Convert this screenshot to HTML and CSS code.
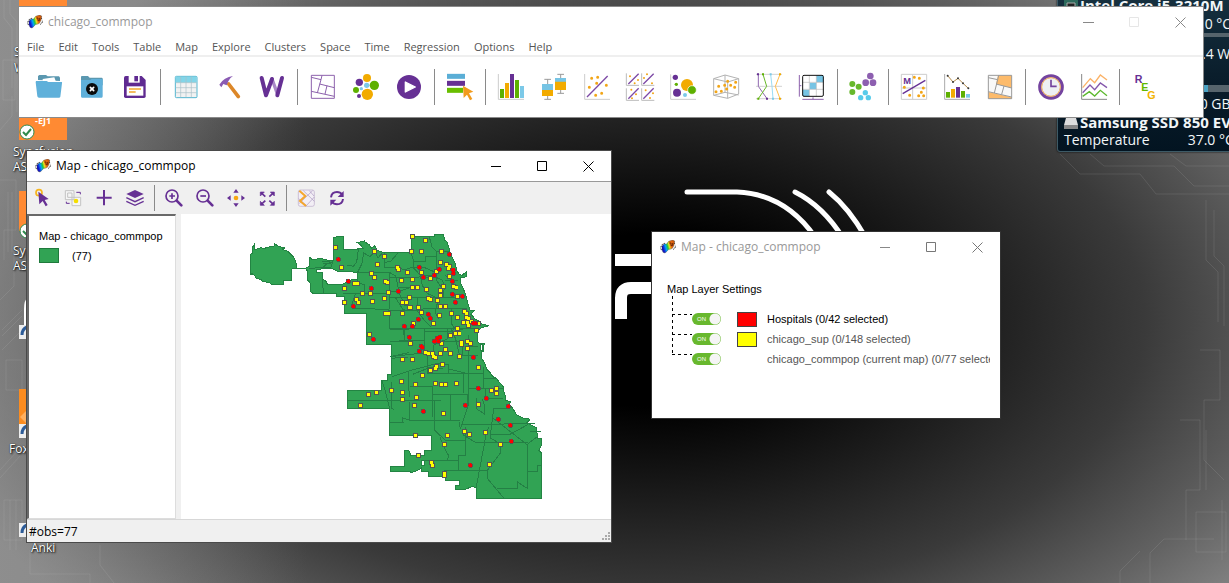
FILE: index.html
```html
<!DOCTYPE html>
<html lang="en">
<head>
<meta charset="utf-8">
<title>chicago_commpop</title>
<link rel="stylesheet" href="styles.css">
</head>
<body>
<svg width="0" height="0" class="defs" aria-hidden="true">
  <defs>
    <linearGradient id="rainbow" x1="0" x2="1" y1=".3" y2="0">
      <stop offset="0" stop-color="#1414c8"/><stop offset=".2" stop-color="#00a0ff"/><stop offset=".35" stop-color="#20c840"/><stop offset=".48" stop-color="#e8e020"/><stop offset=".6" stop-color="#f07010"/><stop offset="1" stop-color="#c05008"/>
    </linearGradient>
    <symbol id="app" viewBox="0 0 48 42">
      <path d="M2 22l4-8 8-4M2 26l4 6M40 28l5-4 2-8M42 8l4 6" fill="none" stroke="#111" stroke-width="3" stroke-dasharray="4 3"/>
      <path d="M6 18l8-7 5 2 7-9 12-4 6 3-2 13-5 9-7 3-4 0-5 6-6 5-6-2-3-8z" fill="url(#rainbow)" stroke="#222" stroke-width="1"/>
      <path d="M28 9h5v8h5v-8" fill="none" stroke="#6a2808" stroke-width="3"/>
    </symbol>
  </defs>
</svg>
<main class="desktop">
  <svg class="wallpaper" width="1229" height="583" viewBox="0 0 1229 583" aria-hidden="true">
    <g fill="none" stroke="#d0d0d0" stroke-opacity=".13" stroke-width="1">
      <path d="M4 0v18l8 10v60M10 0v14l7 8v90M3 60h12v40H3zM0 130l12-14v-20M0 180h16v50H4v30M8 192v60M12 192v60M0 300l14-14v-40M2 330l20-20M2 336l20-20M2 350l20-20M6 360h16v30H6zM0 470l20-22M0 478l20-22M4 500h18v40H4zM10 500v50M16 500v50M30 550v24h60v9M100 545v20l14 18M1060 154l20 20h60l16 20h73M1090 154l14 12h70l20 20h35M1170 154l16 12h43M1206 200v60l12 12v50M1214 210v46l10 10v60M1200 350h20v50h-16v60l20 20M1180 420h20v70h-14v50M1150 583v-30l14-14h50M1196 512h30v40h-30zM1120 583v-12l20-20M1206 430v60M1222 500v60"/>
    </g>
    <g fill="none" stroke="#fff" stroke-width="5" stroke-linecap="round">
      <path d="M687 192h50q48 2 78 45M795 192q28 14 48 46M829 192q20 16 37 46"/>
      <path d="M615 260h40M621 319v-21q0-10 10-10h25" stroke-width="12" stroke-linecap="butt"/>
    </g>
    <g>
      <rect x="19" y="-5" width="48" height="20" rx="2" fill="#ff8a33"/>
      <rect x="19" y="100" width="48" height="40" fill="#ff8a33"/>
      <rect x="19" y="191" width="48" height="40" fill="#ff8a33"/>
      <rect x="19" y="389" width="48" height="40" fill="#fb8c20"/>
      <path d="M27 410l-7 7 7 7" fill="#ffb060"/>
      <path d="M28 297q-4 3-4 12v22h6" fill="#fff"/>
      <g fill="#fff" stroke="#2e8a4c" stroke-width="1"><circle cx="27" cy="132" r="7"/><circle cx="27" cy="231" r="7"/></g>
      <path d="M23 132l3 3 5-6M23 231l3 3 5-6" fill="none" stroke="#2e8a4c" stroke-width="2"/>
      <path d="M19 325h12v14h-12zM19 424h12v14h-12zM19 523h12v14h-12z" fill="#eee"/>
      <path d="M22 335q0-6 5-8M22 434q0-6 5-8M22 533q0-6 5-8" fill="none" stroke="#2d5c98" stroke-width="3"/>
    </g>
  </svg>
  <div class="shortcut s-top">S<br>W</div>
  <div class="shortcut s-ejt">-EJ1</div>
  <div class="shortcut s-one">Syncfusion<br>ASP</div>
  <div class="shortcut s-two">Syn<br>ASP</div>
  <div class="shortcut s-fox">Foxit</div>
  <div class="shortcut s-anki">Anki</div>

  <aside class="gadget">
    <div class="g-row g-cpu"><svg width="14" height="12" viewBox="0 0 14 12"><path d="M0 0h14v12H0z" fill="#2d6a5c"/><path d="M3 3h8v6H3z" fill="#222" stroke="#aaa"/></svg><b>Intel Core i5-3210M</b></div>
    <div class="g-row g-end">65.0 °C</div>
    <div class="g-bar"></div>
    <div class="g-row g-end g-watt">12.4 W</div>
    <div class="g-bar g-load"></div>
    <div class="g-row g-end g-mem">8.0 GB</div>
    <div class="g-row g-disk"><svg width="14" height="12" viewBox="0 0 14 12"><path d="M2 1h10l2 7H0z" fill="#ddd"/><path d="M0 8h14v4H0z" fill="#888"/></svg><b>Samsung SSD 850 EV</b></div>
    <div class="g-row g-temp"><span>Temperature</span><span>37.0 °C</span></div>
  </aside>

  <section class="window main-window">
    <header class="titlebar">
      <svg class="app-icon" width="16" height="14"><use href="#app"/></svg>
      <h1 class="title faded">chicago_commpop</h1>
      <div class="controls">
        <button aria-label="Minimize"><svg width="11" height="11"><path d="M0 5.5h11" stroke="#888"/></svg></button>
        <button aria-label="Maximize" disabled><svg width="11" height="11"><path d="M.5.5h9v9h-9z" fill="none" stroke="#e6e6e6"/></svg></button>
        <button aria-label="Close"><svg width="11" height="11"><path d="M.5.5l10 10M10.500.5l-10 10" stroke="#888"/></svg></button>
      </div>
    </header>
    <nav class="menu">
      <button>File</button><button>Edit</button><button>Tools</button><button>Table</button><button>Map</button><button>Explore</button><button>Clusters</button><button>Space</button><button>Time</button><button>Regression</button><button>Options</button><button>Help</button>
    </nav>
    <div class="toolbar">
      <button aria-label="Open"><svg viewBox="102 216 90 90"><path d="M114 240v-12l4-3h20l5 4h34l3 4v10z" fill="#5b98b0"/><path d="M128 246v-9l35-5 4 11z" fill="#fff"/><path d="M108 243h32l5 3h40q2 0 1 4l-5 40q-1 3-4 3h-60q-4 0-5-4l-5-42z" fill="#5fb0da"/></svg></button>
      <button aria-label="Close project"><svg viewBox="231 216 90 90"><path d="M243 230q0-2 3-2h18l5 5h36q3 0 3 3v20h-65z" fill="#5b98b0"/><path d="M243 240h28l3-3h34v52q0 4-3 4h-59q-3 0-3-4z" fill="#5fb0da"/><circle cx="276" cy="267" r="18" fill="#0a0a0a"/><path d="M271 262l10 10M281 262l-10 10" stroke="#fff" stroke-width="5" stroke-linecap="round"/></svg></button>
      <button aria-label="Save"><svg viewBox="360 216 90 90"><path d="M377 228h48l12 12v49q0 5-5 5h-55q-5 0-5-5v-56q0-5 5-5z" fill="#5f2a91"/><path d="M386 228h33v20h-33z" fill="#fff"/><path d="M403 228h11v16h-11z" fill="#5f2a91"/><path d="M380 259h50v28h-50z" fill="#fff"/><path d="M387 267h36M387 276h20" stroke="#f2a72e" stroke-width="5"/></svg></button>
      <i class="sep"></i>
      <button aria-label="Table"><svg viewBox="513 216 90 90"><rect x="526" y="229" width="65" height="64" rx="3" fill="#f2f2f2" stroke="#52b5cf" stroke-width="3"/><path d="M527 230h63v18h-63z" fill="#82d5e8"/><path d="M527 248h63M527 263h63M527 278h63M542 230v62M558 230v62M574 230v62" stroke="#a9bfc7" stroke-width="2"/></svg></button>
      <button aria-label="Tools"><svg viewBox="642 216 90 90"><path d="M686 252l29 38" stroke="#dc8728" stroke-width="11" stroke-linecap="round"/><path d="M658 254q14-23 41-26-12 7-14 16l-5 12-10-4-6 10z" fill="#8a5bb3"/></svg></button>
      <button aria-label="Weights"><svg viewBox="771 216 90 90"><path d="M816 237l16 44" stroke="#aa88c8" stroke-width="10"/><path d="M785 234l13 52 18-49M832 286l14-52" fill="none" stroke="#663094" stroke-width="12" stroke-linejoin="round" stroke-linecap="round"/></svg></button>
      <i class="sep"></i>
      <button aria-label="Map"><svg viewBox="54 36 90 90"><path d="M64 46h69v69H64zM64 52l29 7 3-13M93 59l-11 40M64 94l69 15M89 72l44 11M111 77l-6 25" fill="none" stroke="#8d62ad" stroke-width="3"/></svg></button>
      <button aria-label="Cartogram"><svg viewBox="183 36 90 90"><g fill="#f2ab00"><circle cx="231" cy="54" r="12"/><circle cx="232" cy="103" r="17"/></g><g fill="#663094"><circle cx="208" cy="67" r="11"/><circle cx="207" cy="108" r="6"/></g><g fill="#5eb000"><circle cx="253" cy="76" r="14"/><circle cx="198" cy="90" r="9"/></g><g fill="#7cc9e8"><circle cx="230" cy="76" r="8"/><circle cx="214" cy="86" r="5"/></g></svg></button>
      <button aria-label="Animate"><svg viewBox="312 36 90 90"><circle cx="357" cy="81" r="36" fill="#663094"/><path d="M346 66v30l30-15z" fill="#fff" stroke="#fff" stroke-width="4" stroke-linejoin="round"/></svg></button>
      <i class="sep"></i>
      <button aria-label="Categories"><svg viewBox="465 36 90 90"><path d="M471 49h54" stroke="#5aaed6" stroke-width="15"/><path d="M471 70h54" stroke="#663094" stroke-width="15"/><path d="M471 91h48" stroke="#69be00" stroke-width="15"/><path d="M519 77l31 18-13 5 10 17-7 4-9-17-10 10z" fill="#f29b1d"/></svg></button>
      <i class="sep"></i>
      <button aria-label="Histogram"><svg viewBox="618 36 90 90"><path d="M625 42v76h77" fill="none" stroke="#ccc" stroke-width="3"/><g stroke-width="12"><path d="M636 114V87" stroke="#5eb000"/><path d="M651 114V69" stroke="#f2ab00"/><path d="M666 114V42" stroke="#663094"/><path d="M681 114V60" stroke="#5eb000"/><path d="M696 114V78" stroke="#7cc9e8"/></g></svg></button>
      <button aria-label="Box plot"><svg viewBox="747 36 90 90"><path d="M763 58h20M773 58v60M763 118h20M802 43h20M812 43v57M802 100h20" stroke="#999" stroke-width="3"/><path d="M756 72h33v18h-33zM795 54h33v12h-33z" fill="#76c4e4"/><path d="M756 90h33v18h-33zM795 65h33v25h-33z" fill="#f2ab00"/></svg></button>
      <button aria-label="Scatter plot"><svg viewBox="36 36 90 90"><path d="M44 42v76h76" fill="none" stroke="#ccc" stroke-width="3"/><path d="M51 111l62-63" stroke="#7d4aa6" stroke-width="4"/><path class="pt" d="M65 55h0M83 52h0M58 82h0M80 70h0M109 76h0M95 100h0M77 106h0"/></svg></button>
      <button aria-label="Scatter plot matrix"><svg viewBox="165 36 90 90"><path d="M169 40v36h38M215 40v36h38M169 85v36h38M215 85v36h38" fill="none" stroke="#bbb" stroke-width="3"/><path d="M175 72l31-31M220 72l31-31M175 116l31-31M220 116l31-31" stroke="#7d4aa6" stroke-width="4"/><path class="pt small" d="M180 49h0M194 70h0M204 60h0M222 54h0M231 43h0M246 70h0M184 89h0M198 103h0M186 115h0M227 91h0M249 100h0M240 114h0"/></svg></button>
      <button aria-label="Bubble chart"><svg viewBox="294 36 90 90"><path d="M302 43v75h76" fill="none" stroke="#ccc" stroke-width="3"/><circle cx="351" cy="75" r="18" fill="#f2ab00"/><circle cx="366" cy="90" r="13" fill="#5eb000" stroke="#fff" stroke-width="2"/><circle cx="321" cy="98" r="12" fill="#663094"/><circle cx="316" cy="52" r="8" fill="#663094"/><circle cx="319" cy="73" r="5" fill="#5eb000"/><circle cx="345" cy="105" r="6" fill="#7cc9e8"/></svg></button>
      <button aria-label="3D scatter"><svg viewBox="423 36 90 90"><path d="M431 56l34-11 41 11v46l-33 13-42-9zM431 56l42 10 33-10M473 66v49M465 45v52l-34 9M465 97l41 8" fill="none" stroke="#b3b3b3" stroke-width="3"/><path class="pt" d="M473 64h0M497 67h0M446 79h0M464 76h0M482 76h0M494 82h0M438 95h0M454 94h0M470 87h0"/></svg></button>
      <button aria-label="Parallel coordinates"><svg viewBox="552 36 90 90"><path d="M558 43h78M558 79h78M558 116h78" stroke="#bbb" stroke-width="2"/><g fill="none" stroke-width="3"><path d="M565 43v36l26 37" stroke="#9068b0"/><path d="M579 43l11 36-25 37" stroke="#69b82a"/><path d="M602 43l4 36 3 37" stroke="#9cdcf5"/><path d="M630 43l-14 36 14 37" stroke="#ffbd4d"/></g><path d="M561 43h6M588 116h6" stroke="#663094" stroke-width="6"/><path d="M576 43h6M562 116h6" stroke="#5eb000" stroke-width="6"/><path d="M599 43h6M606 116h6" stroke="#7cc9e8" stroke-width="6"/><path d="M627 43h6M627 116h6" stroke="#f2ab00" stroke-width="6"/></svg></button>
      <button aria-label="Conditional plot"><svg viewBox="681 36 90 90"><path d="M739 46h21v21h-21zM719 68h20v20h-20zM698 89h20v20h-20z" fill="#76c4e4"/><path d="M718 46v63M739 46v63M698 67h62M698 88h62" stroke="#bbb" stroke-width="2"/><rect x="698" y="46" width="62" height="63" rx="4" fill="none" stroke="#111" stroke-width="3"/><path d="M688 45v65M688 77h6M697 118h64M729 118v-6" stroke="#8d62ad" stroke-width="3"/></svg></button>
      <i class="sep"></i>
      <button aria-label="Cluster"><svg viewBox="834 36 90 90"><g fill="#8d5fb0"><circle cx="901" cy="48" r="10"/><circle cx="887" cy="68" r="10"/><circle cx="909" cy="68" r="10"/></g><g fill="#67b82c"><circle cx="847" cy="72" r="9"/><circle cx="866" cy="80" r="9"/><circle cx="847" cy="96" r="9"/></g><g fill="#58cbea"><circle cx="886" cy="98" r="8"/><circle cx="872" cy="113" r="8"/><circle cx="895" cy="113" r="8"/></g></svg></button>
      <i class="sep"></i>
      <button aria-label="Moran scatter"><svg viewBox="177 36 90 90"><path d="M184 43h76v75h-76zM218 43v75M184 84h76" fill="none" stroke="#ccc" stroke-width="3"/><path d="M188 101l68-40" stroke="#663094" stroke-width="4"/><path class="pt" d="M223 52h0M238 55h0M193 82h0M250 84h0M209 106h0M244 97h0M236 107h0M251 107h0"/><text x="190" y="72" class="ico-m">M</text></svg></button>
      <button aria-label="Correlogram"><svg viewBox="306 36 90 90"><path d="M314 42v76h76" fill="none" stroke="#aaa" stroke-width="3"/><g stroke-width="12"><path d="M324 113V96" stroke="#5eb000"/><path d="M339 113V87" stroke="#f2ab00"/><path d="M354 113V81" stroke="#663094"/><path d="M369 113V93" stroke="#5eb000"/><path d="M384 113v-11" stroke="#7cc9e8"/></g><path d="M323 47l16 19 15-11 15 15 16 15" fill="none" stroke="#b28a4a" stroke-width="3"/><path d="M323 47h0M339 66h0M354 55h0M369 70h0M385 85h0" stroke="#333" stroke-width="6" stroke-linecap="round"/></svg></button>
      <button aria-label="Local map"><svg viewBox="435 36 90 90"><path d="M445 46h70v70h-70z" fill="#f9f9f9"/><path d="M474 46h41v38l-47-12zM445 96l70 16v4h-70z" fill="#fdbb6b"/><path d="M445 46h70v70h-70zM445 53l28 6 3-13M473 59l-10 40M445 95l70 16M468 72l47 12M492 78l-7 25" fill="none" stroke="#999" stroke-width="3"/></svg></button>
      <i class="sep"></i>
      <button aria-label="Time"><svg viewBox="588 36 90 90"><circle cx="633" cy="81" r="34" fill="#eef0f4" stroke="#74439f" stroke-width="9"/><circle cx="633" cy="81" r="28" fill="none" stroke="#f0a34a" stroke-width="3"/><path d="M633 59v20h17" fill="none" stroke="#74439f" stroke-width="5"/></svg></button>
      <button aria-label="Averages"><svg viewBox="717 36 90 90"><path d="M725 42v76h76" fill="none" stroke="#888" stroke-width="3"/><g fill="none" stroke-width="4"><path d="M728 83l23-27 13 12 17-23 20 15" stroke="#fbb267"/><path d="M728 98l22-23 14 14 17-20 20 14" stroke="#8558ac"/><path d="M728 109l20-14 16 13 17-17 20 16" stroke="#5cb82e"/></g></svg></button>
      <i class="sep"></i>
      <button aria-label="Regression"><svg viewBox="870 36 90 90"><g class="ico-reg"><text x="884" y="68" fill="#663094">R</text><text x="904" y="92" fill="#62b800">E</text><text x="922" y="117" fill="#f2b400">G</text></g></svg></button>
    </div>
  </section>

  <section class="window map-window">
    <header class="titlebar">
      <svg class="app-icon" width="16" height="14"><use href="#app"/></svg>
      <h2 class="title">Map - chicago_commpop</h2>
      <div class="controls">
        <button aria-label="Minimize"><svg width="11" height="11"><path d="M0 5.5h10" stroke="#000"/></svg></button>
        <button aria-label="Maximize"><svg width="11" height="11"><path d="M.5.5h9v9h-9z" fill="none" stroke="#000"/></svg></button>
        <button aria-label="Close"><svg width="11" height="11"><path d="M.5.5l10 10M10.500.5l-10 10" stroke="#000"/></svg></button>
      </div>
    </header>
    <div class="maptools">
      <button aria-label="Select"><svg viewBox="31 108 72 72"><circle cx="58" cy="128" r="9" fill="none" stroke="#f7b51e" stroke-width="5"/><path d="M56 125l31 22-12 3 9 15-6 4-9-16-10 10z" fill="#663094"/></svg></button>
      <button aria-label="Invert selection"><svg viewBox="123 108 72 72"><path d="M136 122h26v27h-26zM143 129h13v13h-13zM156 142h26v25h-26z" fill="#f6f6f6" stroke="#c3c3c3" stroke-width="3"/><circle cx="168" cy="153" r="7" fill="#f4de00"/><path d="M169 127h12v6M149 160h-10v-5" fill="none" stroke="#663094" stroke-width="3"/></svg></button>
      <button aria-label="Add layer"><svg viewBox="216 108 72 72"><path d="M230 143h45M252 120v46" stroke="#663094" stroke-width="6"/></svg></button>
      <button aria-label="Layers"><svg viewBox="310 108 72 72"><path d="M346 120l26 12-26 12-26-12z" fill="#663094"/><path d="M320 143l26 12 26-12M320 154l26 12 26-12" fill="none" stroke="#663094" stroke-width="4"/></svg></button>
      <i class="sep"></i>
      <button aria-label="Zoom in"><svg viewBox="426 108 72 72"><circle cx="456" cy="138" r="18" fill="none" stroke="#663094" stroke-width="5"/><path d="M448 138h17M456 130v17" stroke="#663094" stroke-width="5"/><path d="M470 152l14 14" stroke="#663094" stroke-width="8" stroke-linecap="round"/></svg></button>
      <button aria-label="Zoom out"><svg viewBox="519 108 72 72"><circle cx="549" cy="138" r="18" fill="none" stroke="#663094" stroke-width="5"/><path d="M541 138h17" stroke="#663094" stroke-width="5"/><path d="M563 152l14 14" stroke="#663094" stroke-width="8" stroke-linecap="round"/></svg></button>
      <button aria-label="Pan"><svg viewBox="612 108 72 72"><path d="M648 117l8 11h-16zM648 171l8-11h-16zM621 144l11-8v16zM675 144l-11-8v16z" fill="#663094"/><circle cx="648" cy="144" r="7" fill="#f7a811"/></svg></button>
      <button aria-label="Full extent"><svg viewBox="706 108 72 72"><path d="M722 126h12l-12 12zM764 126v12l-12-12zM722 166v-12l12 12zM764 166h-12l12-12z" fill="#663094" stroke="#663094" stroke-width="2"/><path d="M724 128l13 12M762 128l-13 12M724 164l13-12M762 164l-13-12" stroke="#663094" stroke-width="5"/></svg></button>
      <i class="sep"></i>
      <button aria-label="Base map"><svg viewBox="822 108 72 72"><rect x="835" y="120" width="48" height="49" rx="6" fill="#f2eef5" stroke="#b9a9c8" stroke-width="2"/><path d="M838 160l40-38M858 168l25-27M850 122l33 32M868 122l14 16M836 146l24 21" stroke="#ab98c0" stroke-width="2"/><path d="M838 122l18 16-16 15 18 15" fill="none" stroke="#f5a72d" stroke-width="6"/></svg></button>
      <button aria-label="Refresh"><svg viewBox="915 108 72 72"><path d="M933 142q2-16 18-16 10 0 16 8M969 147q-2 16-18 16-10 0-16-8" fill="none" stroke="#663094" stroke-width="6"/><path d="M971 123v18h-18zM931 167v-18h18z" fill="#663094"/></svg></button>
    </div>
    <div class="map-body">
      <div class="legend">
        <p>Map - chicago_commpop</p>
        <div class="legend-row"><i class="swatch green"></i><span>(77)</span></div>
      </div>
      <div class="canvas">
        <svg viewBox="-177 -33 1287 915" preserveAspectRatio="xMinYMin" role="img" aria-label="Chicago community areas">
          <g class="area">
            <path d="M31 88L37 85V68L42 60V73L50 72 62 68 74 72 78 68 90 65 103 63 104 57 118 65 136 69 126 72 145 80 155 90 163 100 168 115 170 131 155 132V166H131V178H95L88 172 68 170 63 163 48 160 44 152 36 146 31 150z"/>
            <path d="M170 131H197"/>
            <path fill-rule="evenodd" d="M197 130L207 124V100L210 98 216 103 245 101 272 108 279 106V68L281 38 293 35H310V75L340 73 370 70 362 60 350 52 372 50V44L376 52 388 60 395 70 405 62 410 75 428 82H515V35H583V28H610L614 45 622 52 630 80 640 105 645 115 650 135 657 148 666 151 680 140V155L662 158 660 170 668 188 676 205 680 220 685 240 690 255 702 257 693 268 705 282 720 290 726 297 748 302 724 308 713 318V350L718 355H734L730 366V378H724V400L733 412 740 432 752 445 758 455 770 460 778 472 790 485 792 500 797 515 798 526 812 530 808 538 818 550 830 570 850 580H865L870 585 860 592 872 600 890 608 892 640H904V662L896 676 904 684V820H709V787L695 785 672 795 647 793V780H658V767H617V753H565V740H543V730L525 740 512 742V738H451V725H493V677H507L512 690H552V677H573V632H449V552L446 549H322V497H425V465H442V448H453V358H379V265H313V213H290V205L222 207 212 200V180L208 170 203 165V140zM228 133V143H247V162L257 168 262 177H310L335 164 352 165V143L320 138H290L275 130zM545 707V720H554V707zM720 358V377H727V358z"/>
          </g>
          <g class="bounds">
            <path d="M208 130l65-4 6-20M247 145v32l5 28M246 108l30 4M250 116h24M250 126l10-10M310 75l45-3-5 40-10 12-18-4M370 83l-2 28-15 31M370 83l20 12 15-16 9 20 14-17M352 143h100M433 82v45M433 112l18-2 25-28M433 127h40l20 8 22-8M352 165v10l20 3v27l-62 1M372 205h75M347 205l-10 28 6 17h35l68 5v10M447 143v110l2 59M447 142l20 10 8 40 6 20 14 30h14M449 199h30l28-10M449 312h58M490 312l4 36M451 349h56M451 395l55-12"/>
            <path transform="translate(450 0)" d="M63 82l8 27h36V94h32M118 36l8 30 14 14M139 80h40M139 80v85l20 30 3 22M71 109v20l20 22 6 30 14 24 23 10M60 127h42l28 12h8M0 157h84l20-6h30M164 150l20 15M164 165h40M105 158h35l18 8 6 30M25 187h65M0 217h225M16 217l22 36 8 2M0 256h90M82 218v40l20 27 20 20M90 256l10-5h130M145 220l-9 42 10 20M184 250v45l12 18h24M122 309h140M0 310h210M43 311v38M103 309v80M103 320h80l12-10M171 312v30l-40 18v40M132 350h84v40M183 312l14 30 12 50M0 395l110-12M111 394v50h65v-12l50 12M68 448l50-20 40 4M214 390h20v60M235 363h28M235 330v60h30M0 350h26l6-4h74"/>
            <path transform="translate(300 390)" d="M155 65l54-18 80-21 36 2v27M153 10l50-4M262 0v30l6 25M205 50v45l5 30M153 80v80l8 3M22 136h280M125 75l10 30 14 55M210 95h67v90M149 202h40l-2-14 22 8h150M207 140v54M277 118h106v30M332 118v76M268 55h163M370 55v60M385 0v150l-20 60-4 10-4-20M430 36v65h62M430 70h40M385 101h50v30h55M410 130v32l22 14v-30l-5-14M283 135v90l32 30h60v-40M365 208h90l6-48M461 160h40M380 225l-10 15 38 23h155M455 210l50-4h80M460 190l100 78M455 210l-5 38 30 18v30l-38 50v24l50 60M450 238h60l55-30M409 395l30-160 8-20M376 250v50h-20v45M248 316h108M312 346h130M300 247l12 30 14 25-4 14M470 400h62v-20l14 10 16 10V268M562 350h30v-20h12M562 268l32-25M570 229h34"/>
          </g>
          <g>
            <g class="sup-edge">
              <path id="sup-west" d="M287 68h0M305 127h0M404 80h0M433 95h0M412 118h0M394 145h0M403 157h0M313 190h0M343 175h0M353 175h0M368 205h0M391 205h0M349 223h0M355 232h0M313 232h0M397 229h0M433 220h0M445 202h0M436 169h0M442 172h0M485 166h0M472 127h0M476 133h0M502 142h0M487 232h0M499 232h0M507 217h0M436 265h0M446 265h0M487 265h0M388 328h0M487 403h0M509 247h0M510 355h0"/>
              <path id="sup-north" transform="translate(450 0)" d="M67 34h0M106 46h0M64 79h0M94 79h0M154 79h0M151 112h0M139 139h0M169 118h0M178 124h0M175 131h0M94 142h0M121 160h0M178 154h0M67 163h0M35 166h0M67 187h0M82 187h0M109 193h0M160 184h0M151 196h0M190 184h0M198 187h0M151 211h0M202 214h0M58 217h0M115 220h0M121 223h0M142 226h0M61 247h0M85 247h0M151 244h0M166 244h0M94 262h0M148 271h0M184 265h0M223 259h0M230 265h0M202 277h0M228 277h0M235 280h0M70 295h0M130 295h0M220 292h0M232 292h0M244 290h0M235 301h0M202 310h0M259 316h0M265 295h0M196 325h0M207 325h0M181 331h0M61 355h0M154 355h0M214 352h0M214 358h0M232 349h0M241 355h0M232 370h0M166 373h0M106 382h0M115 385h0M127 385h0M130 394h0M136 397h0M151 385h0M181 385h0M208 394h0M67 403h0M157 418h0M139 423h0M136 430h0M121 436h0M265 427h0"/>
              <path id="sup-south" transform="translate(300 390)" d="M247 61h0M184 79h0M226 88h0M286 85h0M304 88h0M316 88h0M349 85h0M154 106h0M187 112h0M187 133h0M85 118h0M109 112h0M61 151h0M229 127h0M223 151h0M310 175h0M454 106h0M469 100h0M469 115h0M415 148h0M226 241h0M322 241h0M313 268h0M373 229h0M388 238h0M436 232h0M481 268h0M235 301h0M274 322h0M277 331h0M313 355h0M313 361h0M448 328h0"/>
            </g>
            <g class="sup"><use href="#sup-west"/><use href="#sup-north"/><use href="#sup-south"/></g>
            <g class="hosp-edge">
              <path id="hosp-west" d="M295 103h0M325 169h0M394 190h0M340 244h0M400 343h0"/>
              <path id="hosp-north" transform="translate(450 0)" d="M25 199h0M178 88h0M88 127h0M100 157h0M148 133h0M133 151h0M190 135h0M190 145h0M187 169h0M187 208h0M217 214h0M196 232h0M115 268h0M121 280h0M85 283h0M43 304h0M67 304h0M250 295h0M257 295h0M58 337h0M142 340h0M150 337h0M133 349h0M145 349h0M94 364h0M97 367h0M88 379h0M250 397h0"/>
              <path id="hosp-south" transform="translate(300 390)" d="M415 100h0M439 130h0M376 151h0M250 169h0M505 154h0M475 193h0M511 211h0M514 259h0M391 331h0"/>
            </g>
            <g class="hosp"><use href="#hosp-west"/><use href="#hosp-north"/><use href="#hosp-south"/></g>
          </g>
        </svg>
      </div>
    </div>
    <footer class="status"><span>#obs=77</span><svg width="10" height="10" viewBox="0 0 10 10"><path d="M7 1h2M4 4h2M7 4h2M1 7h2M4 7h2M7 7h2" stroke="#aaa" stroke-width="2"/></svg></footer>
  </section>

  <section class="window layer-window">
    <header class="titlebar">
      <svg class="app-icon" width="16" height="14"><use href="#app"/></svg>
      <h2 class="title faded">Map - chicago_commpop</h2>
      <div class="controls">
        <button aria-label="Minimize"><svg width="11" height="11"><path d="M0 5.5h10" stroke="#888"/></svg></button>
        <button aria-label="Maximize"><svg width="11" height="11"><path d="M.5.5h9v9h-9z" fill="none" stroke="#777"/></svg></button>
        <button aria-label="Close"><svg width="11" height="11"><path d="M.5.5l10 10M10.500.5l-10 10" stroke="#777"/></svg></button>
      </div>
    </header>
    <div class="layers">
      <p>Map Layer Settings</p>
      <div class="tree">
        <svg class="branches" width="20" height="60" viewBox="0 0 20 60"><path d="M.5 0v59M0 18.500h20M0 38.500h20M0 58.500h20" stroke="#000" stroke-dasharray="3 3"/></svg>
        <ul>
          <li><label class="toggle" for="t1"><input id="t1" type="checkbox" checked aria-label="Show Hospitals"><span>ON</span></label><i class="swatch red"></i><span class="name current">Hospitals (0/42 selected)</span></li>
          <li><label class="toggle" for="t2"><input id="t2" type="checkbox" checked aria-label="Show chicago_sup"><span>ON</span></label><i class="swatch yellow"></i><span class="name">chicago_sup (0/148 selected)</span></li>
          <li><label class="toggle" for="t3"><input id="t3" type="checkbox" checked aria-label="Show chicago_commpop"><span>ON</span></label><i class="swatch none"></i><span class="name">chicago_commpop (current map) (0/77 selected)</span></li>
        </ul>
      </div>
    </div>
  </section>
</main>
</body>
</html>
```

FILE: styles.css
```css
* { box-sizing: border-box; }
body { margin: 0; font-family: "Open Sans", "Noto Sans", sans-serif; font-size: 12px; color: #000; }
button { border: 0; background: none; padding: 0; margin: 0; font: inherit; color: inherit; }
h1, h2, p, ul { margin: 0; padding: 0; font-weight: normal; list-style: none; }
svg { display: block; }
.defs { position: absolute; }

.desktop {
  position: relative; height: 100vh; overflow: hidden;
  background:
    linear-gradient(90deg, rgba(150,150,150,.5) 0, rgba(120,120,120,0) 25%),
    radial-gradient(ellipse 760px 430px at 650px 320px, #000 0, #000 20%, #1c1c1c 42%, #3a3a3a 65%, #626262 85%, #858585 100%);
}
.wallpaper { position: absolute; left: 0; top: 0; }

.shortcut { position: absolute; color: #fff; line-height: 15px; text-shadow: 1px 1px 2px #000, 0 0 1px #000; white-space: nowrap; }
.s-top { left: 14px; top: 44px; line-height: 16px; }
.s-ejt { left: 35px; top: 113px; font-size: 9px; font-weight: bold; text-shadow: none; }
.s-one { left: 13px; top: 144px; }
.s-two { left: 13px; top: 243px; }
.s-fox { left: 9px; top: 441px; }
.s-anki { left: 31px; top: 540px; }

.gadget {
  position: absolute; left: 1057px; top: -3px; width: 200px; height: 155px; padding: 0 6px;
  background: linear-gradient(#16303f, #0a1e2c 50%, #031421); border: 1px solid #3d5a66; border-radius: 3px;
  color: #f2f6f8; font-size: 14px; line-height: 17px; white-space: nowrap; box-shadow: 0 0 2px #000;
}
.g-row { display: flex; align-items: center; gap: 2px; }
.g-row b { font-size: 15px; font-weight: bold; }
.g-cpu { height: 15px; }
.g-end { padding-left: 121px; height: 20px; }
.g-bar { height: 4px; margin-bottom: 6px; background: #56646c; }
.g-watt { padding-left: 122px; margin-bottom: 22px; }
.g-load { background: linear-gradient(90deg, #4ba3c4 144px, #56646c 144px); height: 7px; margin-bottom: 0; }
.g-mem { padding-left: 124px; height: 22px; }
.g-disk { height: 17px; }
.g-temp { height: 17px; gap: 38px; }

.window { position: absolute; display: flex; flex-direction: column; background: #fff; border: 1px solid #4a4a4a; }
.titlebar { display: flex; align-items: center; height: 30px; padding-left: 8px; flex: none; }
.title { margin-left: 5px; font-size: 12px; line-height: 16px; }
.faded { color: #999; }
.controls { display: flex; margin-left: auto; }
.controls button { width: 46px; height: 28px; display: grid; place-items: center; }

.main-window { left: 18px; right: 25px; top: 6px; border-color: #8a8a8a; }
.menu { display: flex; gap: 14px; padding: 0 8px; height: 20px; border-bottom: 2px solid #efefef; font-size: 11px; line-height: 20px; color: #555; }
.menu button { display: block; height: 20px; }
.toolbar { display: flex; align-items: center; gap: 3px; padding: 0 10px; height: 60px; }
.toolbar button { width: 40px; height: 40px; display: grid; place-items: center; flex: none; }
.toolbar button svg { width: 30px; height: 30px; }
.sep { width: 5px; height: 36px; flex: none; background: linear-gradient(#8a8a8a, #8a8a8a) center / 1px 100% no-repeat; }
.pt { stroke: #f2a516; stroke-width: 9px; stroke-linecap: round; }
.pt.small { stroke-width: 6px; }
.ico-m { font: bold 28px "Liberation Sans", sans-serif; fill: #663094; }
.ico-reg { font: bold 32px "Liberation Sans", sans-serif; }

.map-window { left: 26px; top: 150px; width: 586px; height: 393px; }
.maptools { display: flex; align-items: center; gap: 3px; height: 33px; padding-left: 1px; background: #f0f0f0; border-top: 1px solid #999; flex: none; }
.maptools button { width: 28px; height: 28px; display: grid; place-items: center; flex: none; }
.maptools button svg { width: 24px; height: 24px; }
.maptools .sep { height: 26px; }
.map-body { display: flex; flex: 1; min-height: 0; background: #f0f0f0; gap: 5px; }
.legend { width: 149px; background: #fff; border-top: 2px solid #696969; border-left: 2px solid #696969; border-right: 1px solid #ddd; border-bottom: 1px solid #ddd; padding: 13px 10px; font: 11px/14px "Liberation Sans", sans-serif; flex: none; }
.legend-row { display: flex; align-items: center; gap: 13px; margin-top: 5px; }
.swatch { width: 20px; height: 15px; border: 1px solid #444; flex: none; }
.green { background: #31a354; border-color: #1f7a3c; }
.red { background: #f00; }
.yellow { background: #ff0; }
.none { border-color: transparent; }
.canvas { flex: 1; min-width: 0; background: #fff; }
.canvas svg { width: 100%; height: 100%; shape-rendering: crispEdges; }
.area { fill: #31a354; stroke: #238443; stroke-width: 3px; }
.bounds { fill: none; stroke: #248045; stroke-width: 3px; }
.sup-edge { stroke: #555; stroke-width: 14px; stroke-linecap: square; }
.sup { stroke: #ff0; stroke-width: 9px; stroke-linecap: square; }
.hosp-edge { stroke: #555; stroke-width: 15px; stroke-linecap: round; }
.hosp { stroke: #f00; stroke-width: 12px; stroke-linecap: round; }
.status { display: flex; justify-content: space-between; align-items: center; height: 23px; background: #f0f0f0; border-top: 1px solid #d7d7d7; padding-left: 2px; flex: none; }
.status svg { align-self: flex-end; }

.layer-window { left: 651px; top: 231px; width: 350px; height: 188px; border-color: #333; }
.layers { padding: 20px 10px 0 15px; font: 11px/14px "Liberation Sans", sans-serif; }
.tree { display: flex; padding-left: 5px; }
.branches { flex: none; }
.tree ul { flex: 1; min-width: 0; padding-top: 13px; }
.tree li { display: flex; align-items: center; height: 20px; }
.toggle { display: grid; align-items: center; flex: none; width: 29px; margin-right: 16px; }
.toggle input { grid-area: 1 / 1; appearance: none; margin: 0; width: 29px; height: 12px; border-radius: 6px; background: radial-gradient(circle at 23px 6px, #f5f5f5 5px, #68b82e 6px); }
.toggle span { grid-area: 1 / 1; padding-left: 5px; font-size: 6px; line-height: 12px; color: #fff; }
.name { margin-left: 10px; white-space: nowrap; overflow: hidden; color: #555; }
.current { color: #000; }
```
